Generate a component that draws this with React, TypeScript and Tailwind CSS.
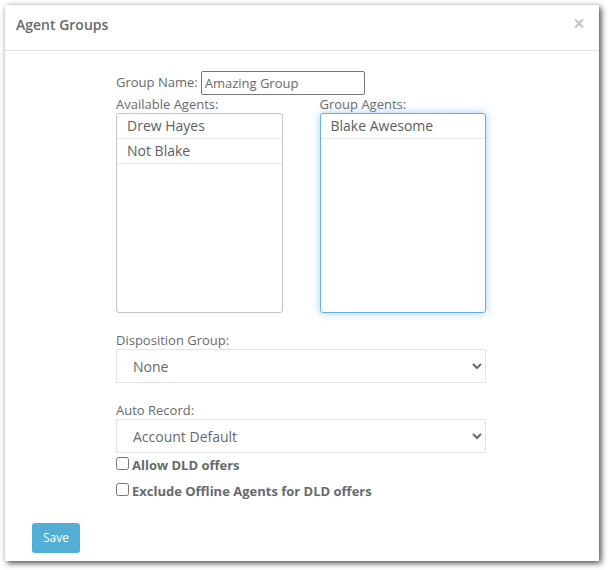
import React from "react";

const availableAgents = ["Drew Hayes", "Not Blake"];
const groupAgents = ["Blake Awesome"];

type AgentListProps = {
  id: string;
  label: string;
  agents: string[];
  active?: boolean;
};

function AgentList({ id, label, agents, active = false }: AgentListProps) {
  const frame = active
    ? "border-[#66afe9] shadow-[0_0_8px_rgba(102,175,233,0.6)]"
    : "border-[#c4c4c4]";
  return (
    <div className="flex flex-1 flex-col">
      <label htmlFor={id} className="leading-[18px]">
        {label}
      </label>
      <select
        id={id}
        multiple
        className={`h-[200px] w-full overflow-hidden rounded-[3px] border bg-white p-0 text-sm text-[#5c5e60] outline-none ${frame}`}
      >
        {agents.map((agent) => (
          <option
            key={agent}
            className="h-[25px] border-b border-[#e9e9e9] px-[10px] pt-[2px] pb-0 leading-6"
          >
            {agent}
          </option>
        ))}
      </select>
    </div>
  );
}

function SelectField({ id, label, value }: { id: string; label: string; value: string }) {
  return (
    <div className="flex flex-col">
      <label htmlFor={id} className="leading-[18px]">
        {label}
      </label>
      <select
        id={id}
        className="h-[34px] w-full border border-[#e3e4e5] bg-white px-3 text-sm text-[#676a6c]"
      >
        <option>{value}</option>
      </select>
    </div>
  );
}

function CheckField({ label }: { label: string }) {
  return (
    <label className="flex h-[26px] items-center gap-[3px] font-bold">
      <input type="checkbox" className="mb-[6px] size-[13px]" />
      {label}
    </label>
  );
}

export default function App() {
  return (
    <div className="bg-white pt-[5px] pr-[9px] pb-[9px] pl-[5px] font-['Open_Sans',sans-serif] text-[13px] text-[#676a6c]">
      <section
        role="dialog"
        aria-labelledby="dialog-title"
        className="bg-white shadow-[2px_2px_6px_rgba(0,0,0,0.75)]"
      >
        <header className="flex h-[46px] items-center justify-between border-b border-[#e3e3e3] pr-[14px] pb-[6px] pl-[11px]">
          <h1 id="dialog-title" className="text-sm font-semibold">
            Agent Groups
          </h1>
          <button type="button" aria-label="Close" className="pb-1 text-[21px] leading-5 font-bold text-[#c9c9c9]">
            ×
          </button>
        </header>
        <form className="pt-5 pb-2" onSubmit={(e) => e.preventDefault()}>
          <div className="pr-[113px] pl-[111px]">
            <div className="flex items-center gap-[3px]">
              <label htmlFor="group-name">Group Name:</label>
              <input
                id="group-name"
                type="text"
                defaultValue="Amazing Group"
                className="h-6 w-[164px] rounded-[2px] border border-[#767676] bg-white px-[3px]"
              />
            </div>
            <div className="flex gap-[37px]">
              <AgentList id="available" label="Available Agents:" agents={availableAgents} />
              <AgentList id="group" label="Group Agents:" agents={groupAgents} active />
            </div>
            <div className="mt-[18px] flex flex-col gap-[18px]">
              <SelectField id="disposition" label="Disposition Group:" value="None" />
              <SelectField id="record" label="Auto Record:" value="Account Default" />
            </div>
            <CheckField label="Allow DLD offers" />
            <CheckField label="Exclude Offline Agents for DLD offers" />
          </div>
          <button
            type="submit"
            className="mt-[18px] ml-[27px] h-[30px] w-12 rounded-[3px] bg-[#52aed4] text-xs text-white"
          >
            Save
          </button>
        </form>
      </section>
    </div>
  );
}
